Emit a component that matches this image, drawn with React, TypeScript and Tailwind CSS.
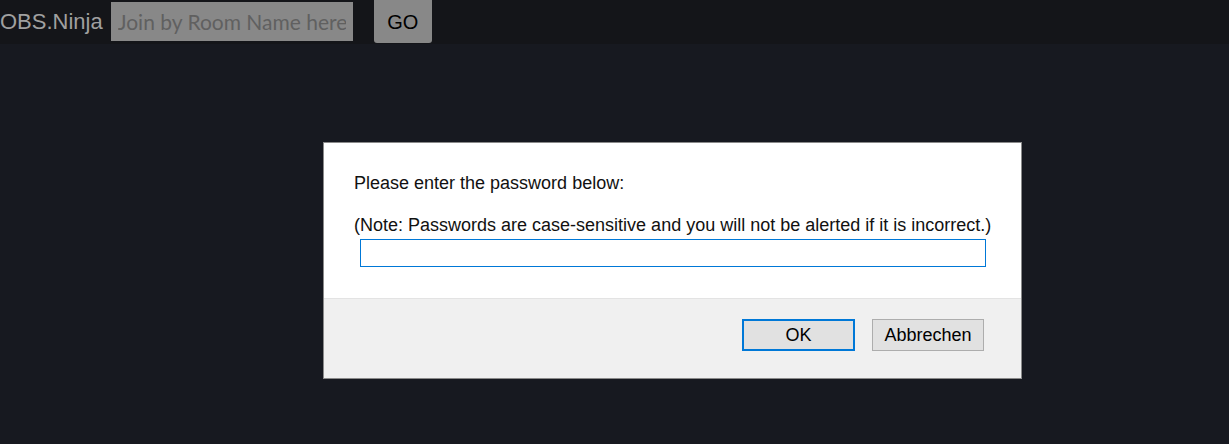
import React from "react";

export default function App() {
  return (
    <div className="relative w-[1229px] h-[444px] overflow-hidden bg-[#171920] font-['Liberation_Sans',Arial,sans-serif]">
      <div className="flex items-start h-[44px] bg-[#141519]">
        <div className="mt-[9px] ml-0 text-[22px] leading-[26px] text-[#a0a0a0]">OBS.Ninja</div>
        <input
          className="ml-[8px] mt-[2px] w-[242px] h-[39px] bg-[#888888] px-[7px] text-[21px] font-['Lato',sans-serif] text-[#555] placeholder:text-[#606060] outline-none"
          placeholder="Join by Room Name here"
        />
        <button className="ml-[21px] w-[58px] h-[43px] bg-[#888888] rounded-b-[3px] text-[20px] text-black">
          GO
        </button>
      </div>

      <div className="absolute left-[323px] top-[142px] w-[699px] h-[237px] border border-[#8a8a8a] bg-white flex flex-col text-[18px] text-[#111]">
        <div className="h-[156px] pl-[30px] pt-[29px] border-b border-[#e3e3e3]">
          <div className="leading-[22px]">Please enter the password below:</div>
          <div className="mt-[20px] leading-[22px]">(Note: Passwords are case-sensitive and you will not be alerted if it is incorrect.)</div>
          <input
            type="password"
            className="block mt-[3px] ml-[6px] w-[626px] h-[28px] border border-[#0078d7] outline-none bg-white"
          />
        </div>
        <div className="flex-1 bg-[#f0f0f0] flex justify-end items-start pt-[20px] pr-[37px] gap-[17px]">
          <button className="w-[113px] h-[32px] bg-[#e1e1e1] border-2 border-[#0078d7] text-[18px] text-black leading-none">
            OK
          </button>
          <button className="w-[112px] h-[32px] bg-[#e1e1e1] border border-[#adadad] text-[18px] text-black leading-none">
            Abbrechen
          </button>
        </div>
      </div>
    </div>
  );
}
